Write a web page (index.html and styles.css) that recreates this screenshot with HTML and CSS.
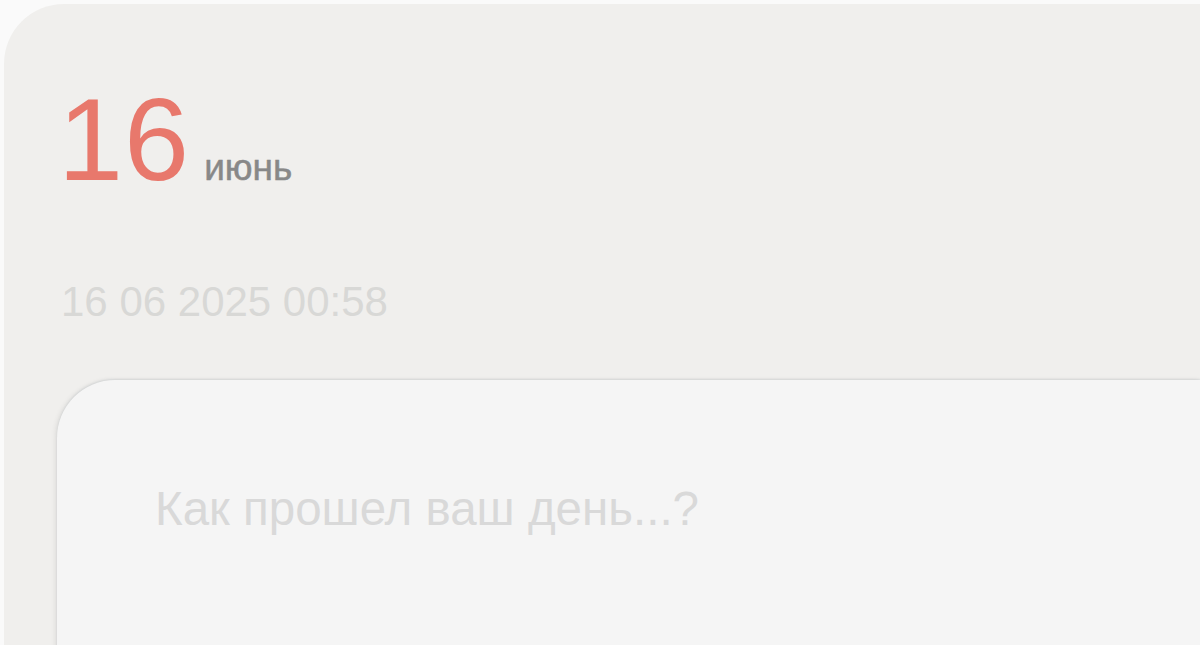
FILE: index.html
```html
<!DOCTYPE html>
<html lang="ru">
<head>
<meta charset="utf-8">
<title>Дневник</title>
<link rel="stylesheet" href="styles.css">
</head>
<body>
<main class="day-card">
  <header class="day-head">
    <span class="day-num">16</span>
    <span class="day-month">июнь</span>
  </header>
  <div class="day-stamp">16 06 2025 00:58</div>
  <section class="entry">
    <div class="entry-placeholder">Как прошел ваш день...?</div>
  </section>
</main>
</body>
</html>
```

FILE: styles.css
```css
html, body {
  margin: 0;
  padding: 0;
  height: 100%;
  overflow: hidden;
}
body {
  background: #fafafa;
  font-family: "Liberation Sans", Arial, "Helvetica Neue", sans-serif;
}
.day-card {
  margin: 4px 0 0 4px;
  min-height: 700px;
  background: #f0efed;
  border-top-left-radius: 60px;
  padding: 77px 0 0 54px;
  box-sizing: border-box;
}
.day-head {
  display: flex;
  align-items: baseline;
  gap: 14px;
  line-height: 1;
}
.day-num {
  font-size: 117px;
  color: #e8786c;
  letter-spacing: 1px;
}
.day-month {
  font-size: 37px;
  color: #888888;
  -webkit-text-stroke: 0.5px #888888;
}
.day-stamp {
  margin-top: 83px;
  margin-left: 3px;
  font-size: 42px;
  line-height: 1;
  color: #d8d8d6;
}
.entry {
  margin-top: 57px;
  margin-left: -1px;
  min-height: 400px;
  background: #f5f5f5;
  border-top-left-radius: 58px;
  box-shadow: 0 -1px 2px rgba(150, 165, 170, 0.25), -2px 0 5px rgba(0, 0, 0, 0.07);
  padding: 105px 0 0 98px;
  box-sizing: border-box;
}
.entry-placeholder {
  font-size: 47.5px;
  line-height: 1;
  color: #d9d9d9;
}
```
